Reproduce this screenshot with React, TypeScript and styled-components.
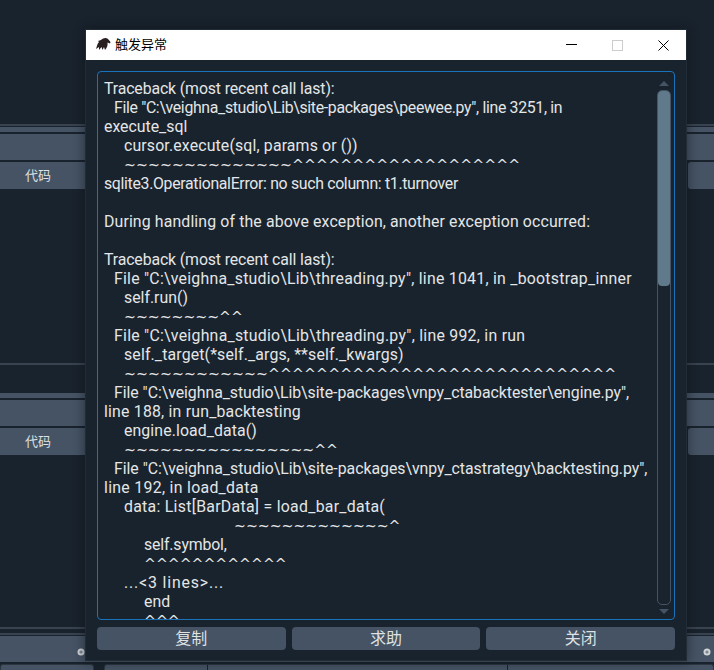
import React from "react";
import styled, { createGlobalStyle } from "styled-components";

const Global = createGlobalStyle`
  html, body { margin: 0; padding: 0; background: #19232d; }
  #root { width: 714px; height: 670px; overflow: hidden; }
`;

const Page = styled.div`
  position: relative;
  width: 714px;
  height: 670px;
  overflow: hidden;
  background: #19232d;
  display: flex;
  flex-direction: column;
  font-family: "Noto Sans CJK SC", sans-serif;
`;

const Gap = styled.div<{ $h: number }>`
  height: ${(p) => p.$h}px;
  flex: none;
`;

const Rule = styled.div`
  height: 2px;
  flex: none;
  background: #38434f;
`;

const Band = styled.div<{ $h: number }>`
  height: ${(p) => p.$h}px;
  flex: none;
  background: #455364;
`;

const HeaderRow = styled.div<{ $h: number }>`
  height: ${(p) => p.$h}px;
  flex: none;
  display: flex;
  gap: 2px;
`;

const HeaderCell = styled.div`
  flex: 1;
  background: #455364;
  color: #dfe1e2;
  font-size: 13px;
  line-height: 26px;
  padding-left: 25px;
`;

const EndCell = styled.div`
  width: 26px;
  flex: none;
  background: #455364;
  border-radius: 3px 0 0 3px;
`;

const FooterRow = styled.div`
  position: relative;
  height: 26px;
  flex: none;
  background: #455364;
`;

const Badge = styled.svg<{ $x: number }>`
  position: absolute;
  left: ${(p) => p.$x}px;
  top: 12px;
`;

const BottomRow = styled.div`
  flex: 1;
  display: flex;
  gap: 10px;
`;

const BottomCell = styled.div<{ $w?: number }>`
  ${(p) => (p.$w ? `width: ${p.$w}px; flex: none;` : "flex: 1;")}
  background: #455364;
  border: 1px solid #2b3640;
  border-bottom: none;
  border-radius: 3px 3px 0 0;
  display: flex;
`;

const CellDivider = styled.div<{ $x: number }>`
  margin-left: ${(p) => p.$x}px;
  width: 1px;
  background: #19232d;
`;

const Dialog = styled.div`
  position: absolute;
  left: 86px;
  top: 30px;
  width: 600px;
  height: 630px;
  background: #19232d;
  box-shadow: 0 0 0 1px #222c36, 0 0 10px 2px rgba(10, 14, 20, 0.45);
  display: flex;
  flex-direction: column;
`;

const TitleBar = styled.div`
  height: 30px;
  box-sizing: border-box;
  padding: 0 0 3px 9px;
  flex: none;
  background: #fff;
  display: flex;
  align-items: center;
  color: #000;
  font-size: 13px;
`;

const TitleText = styled.span`
  margin-left: 4px;
  flex: 1;
`;

const WinButton = styled.div`
  width: 46px;
  height: 30px;
  margin-bottom: -3px;
  display: flex;
  align-items: center;
  justify-content: center;
`;

const Body = styled.div`
  flex: 1;
  display: flex;
  flex-direction: column;
  padding: 11px 11px 10px;
  gap: 7px;
  min-height: 0;
`;

const TextBox = styled.div`
  flex: 1;
  min-height: 0;
  border: 1px solid #1a72bb;
  border-radius: 4px;
  display: flex;
  overflow: hidden;
`;

const Trace = styled.div`
  flex: 1;
  padding-top: 7px;
  padding-left: 6px;
  overflow: hidden;
  color: #e4e6e7;
  font-family: Roboto, sans-serif;
  font-size: 15.85px;
  line-height: 19px;
`;

const Line = styled.div<{ $indent: number; $track: number }>`
  height: 19px;
  padding-left: ${(p) => p.$indent}px;
  letter-spacing: ${(p) => p.$track}px;
  white-space: pre;
`;

const Mark = styled.span`
  font-family: "DejaVu Sans", sans-serif;
  font-size: 14.2px;
`;

const ScrollBar = styled.div`
  width: 16px;
  flex: none;
  display: flex;
  flex-direction: column;
  align-items: center;
  padding: 9px 0 5px;
  margin-right: 2px;
`;

const Arrow = styled.div<{ $down?: boolean }>`
  width: 0;
  height: 0;
  flex: none;
  border-left: 5.5px solid transparent;
  border-right: 5.5px solid transparent;
  ${(p) => (p.$down ? "border-top: 5px solid #455364;" : "border-bottom: 5px solid #455364;")}
`;

const Track = styled.div`
  flex: 1;
  width: 12px;
  margin: 4px 0;
  border: 1px solid #455364;
  border-radius: 5px;
  display: flex;
`;

const Thumb = styled.div`
  width: 100%;
  height: 195px;
  background: #60798b;
  border-radius: 4px;
`;

const Buttons = styled.div`
  height: 23px;
  flex: none;
  display: flex;
  gap: 6px;
`;

const ActionButton = styled.button`
  flex: 1;
  border: none;
  border-radius: 4px;
  background: #455364;
  color: #dfe1e2;
  font-family: "Noto Sans CJK SC", sans-serif;
  font-size: 16px;
  padding: 0 0 2px;
  line-height: 21px;
`;

type TraceLine = { t: string; i?: number; m?: boolean; s?: number };

const lines: TraceLine[] = [
  { t: "Traceback (most recent call last):", s: -0.12 },
  { t: 'File "C:\\veighna_studio\\Lib\\site-packages\\peewee.py", line 3251, in', i: 10, s: -0.33 },
  { t: "execute_sql" },
  { t: "cursor.execute(sql, params or ())", i: 20, s: 0.15 },
  { t: "~".repeat(14) + "^".repeat(19), i: 20, m: true, s: 0.12 },
  { t: "sqlite3.OperationalError: no such column: t1.turnover", s: -0.32 },
  { t: " " },
  { t: "During handling of the above exception, another exception occurred:", s: 0.13 },
  { t: " " },
  { t: "Traceback (most recent call last):", s: -0.12 },
  { t: 'File "C:\\veighna_studio\\Lib\\threading.py", line 1041, in _bootstrap_inner', i: 10, s: 0.25 },
  { t: "self.run()", i: 20 },
  { t: "~".repeat(8) + "^^", i: 20, m: true },
  { t: 'File "C:\\veighna_studio\\Lib\\threading.py", line 992, in run', i: 10, s: 0.26 },
  { t: "self._target(*self._args, **self._kwargs)", i: 20, s: 0.15 },
  { t: "~".repeat(12) + "^".repeat(29), i: 20, m: true, s: 0.12 },
  { t: 'File "C:\\veighna_studio\\Lib\\site-packages\\vnpy_ctabacktester\\engine.py",', i: 10, s: -0.04 },
  { t: "line 188, in run_backtesting", s: 0.2 },
  { t: "engine.load_data()", i: 20, s: 0.1 },
  { t: "~".repeat(16) + "^^", i: 20, m: true },
  { t: 'File "C:\\veighna_studio\\Lib\\site-packages\\vnpy_ctastrategy\\backtesting.py",', i: 10, s: -0.03 },
  { t: "line 192, in load_data", s: 0.3 },
  { t: "data: List[BarData] = load_bar_data(", i: 20, s: 0.28 },
  { t: "~".repeat(13) + "^", i: 130, m: true },
  { t: "self.symbol,", i: 40, s: -0.15 },
  { t: "^".repeat(12), i: 40, m: true },
  { t: "...<3 lines>...", i: 20, s: 0.85 },
  { t: "end", i: 40 },
  { t: "^^^", i: 40, m: true },
];

const badge = (x: number) => (
  <Badge $x={x} width="8" height="8" viewBox="0 0 8 8">
    <circle cx="4" cy="4" r="3.5" fill="#cfd3d6" />
    <circle cx="4" cy="4" r="1.6" fill="#7d8791" />
  </Badge>
);

export default function App() {
  return (
    <Page>
      <Global />
      <Gap $h={124} />
      <Rule />
      <Gap $h={1} />
      <Band $h={5} />
      <Gap $h={2} />
      <Band $h={26} />
      <Gap $h={2} />
      <HeaderRow $h={27}>
        <HeaderCell>代码</HeaderCell>
        <EndCell />
      </HeaderRow>
      <Gap $h={174} />
      <Rule />
      <Gap $h={28} />
      <Band $h={5} />
      <Gap $h={2} />
      <Band $h={26} />
      <Gap $h={2} />
      <HeaderRow $h={27}>
        <HeaderCell>代码</HeaderCell>
        <EndCell />
      </HeaderRow>
      <Gap $h={172} />
      <Rule />
      <Gap $h={4} />
      <Rule />
      <Gap $h={1} />
      <FooterRow>
        {badge(77)}
        {badge(703)}
      </FooterRow>
      <Gap $h={2} />
      <BottomRow>
        <BottomCell $w={92} />
        <BottomCell>
          <CellDivider $x={102} />
          <CellDivider $x={299} />
        </BottomCell>
      </BottomRow>
      <Dialog>
        <TitleBar>
          <svg width="16" height="14" viewBox="0 0 16 14">
            <path
              d="M1 12 C2 9 2 7 4 5 L3 4 L6 3 C8 1 11 0 13 2 L15.5 5 L15 6.5 L12.5 5.5 C13 8 12 11 10 13 L9 10 L7.5 13 L6.5 10 L4 13 L4 10 Z"
              fill="#2a2020"
            />
          </svg>
          <TitleText>触发异常</TitleText>
          <WinButton>
            <svg width="11" height="2"><rect width="11" height="1" fill="#000" /></svg>
          </WinButton>
          <WinButton>
            <svg width="11" height="11"><rect x="0.5" y="0.5" width="10" height="10" fill="none" stroke="#ccc" /></svg>
          </WinButton>
          <WinButton>
            <svg width="11" height="11"><path d="M0.5 0.5 L10.5 10.5 M10.5 0.5 L0.5 10.5" stroke="#000" /></svg>
          </WinButton>
        </TitleBar>
        <Body>
          <TextBox>
            <Trace>
              {lines.map((l, n) => (
                <Line key={n} $indent={l.i ?? 0} $track={l.s ?? 0}>
                  {l.m ? <Mark>{l.t}</Mark> : l.t}
                </Line>
              ))}
            </Trace>
            <ScrollBar>
              <Arrow />
              <Track><Thumb /></Track>
              <Arrow $down />
            </ScrollBar>
          </TextBox>
          <Buttons>
            <ActionButton>复制</ActionButton>
            <ActionButton>求助</ActionButton>
            <ActionButton>关闭</ActionButton>
          </Buttons>
        </Body>
      </Dialog>
    </Page>
  );
}
